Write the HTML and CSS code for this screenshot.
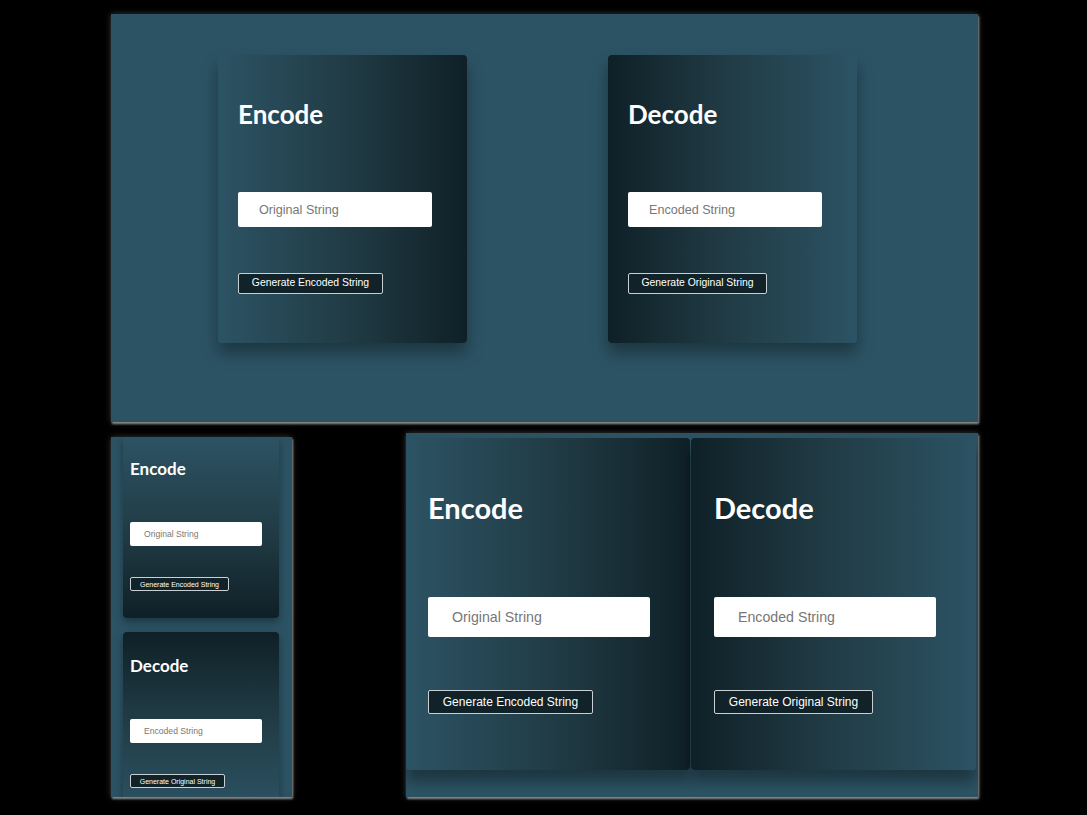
FILE: index.html
```html
<!DOCTYPE html>
<html lang="en">
<head>
<meta charset="utf-8">
<title>Encode / Decode</title>
<link rel="stylesheet" href="styles.css">
</head>
<body>
<div class="desk">
  <section class="win win-desktop">
    <div class="card card-enc">
      <h2 class="title">Encode</h2>
      <input class="field" type="text" placeholder="Original String">
      <button class="btn" type="button">Generate Encoded String</button>
    </div>
    <div class="card card-dec">
      <h2 class="title">Decode</h2>
      <input class="field" type="text" placeholder="Encoded String">
      <button class="btn" type="button">Generate Original String</button>
    </div>
  </section>

  <section class="win win-mobile">
    <div class="card card-enc">
      <h2 class="title">Encode</h2>
      <input class="field" type="text" placeholder="Original String">
      <button class="btn" type="button">Generate Encoded String</button>
    </div>
    <div class="card card-dec">
      <h2 class="title">Decode</h2>
      <input class="field" type="text" placeholder="Encoded String">
      <button class="btn" type="button">Generate Original String</button>
    </div>
  </section>

  <section class="win win-tablet">
    <div class="card card-enc">
      <h2 class="title">Encode</h2>
      <input class="field" type="text" placeholder="Original String">
      <button class="btn" type="button">Generate Encoded String</button>
    </div>
    <div class="card card-dec">
      <h2 class="title">Decode</h2>
      <input class="field" type="text" placeholder="Encoded String">
      <button class="btn" type="button">Generate Original String</button>
    </div>
  </section>
</div>
</body>
</html>
```
FILE: styles.css
```css
* { box-sizing: border-box; }
html, body { margin: 0; padding: 0; background: #000; }
body { width: 1087px; height: 815px; overflow: hidden; font-family: "Liberation Sans", Arial, sans-serif; }

.desk { position: relative; width: 1087px; height: 815px; }

.win {
  position: absolute;
  background: #2c5364;
  overflow: hidden;
  box-shadow: 1px 2px 2px #8a8a8a, 0 0 6px rgba(255,255,255,0.22);
}

.card {
  display: flex;
  flex-direction: column;
  align-items: flex-start;
  border-radius: 4px;
  box-shadow: 0 10px 16px rgba(0,0,0,0.35);
}
.title {
  margin: 0;
  color: #fff;
  font-family: Lato, "Open Sans", sans-serif;
  font-weight: 700;
}
.field {
  border: none;
  outline: none;
  background: #fff;
  border-radius: 2px;
  font-family: "Liberation Sans", Arial, sans-serif;
  color: #333;
}
.field::placeholder { color: #777; }
.btn {
  background: #112229;
  color: #fff;
  border: 1px solid #c9d0d3;
  border-radius: 2px;
  font-family: "Liberation Sans", Arial, sans-serif;
  padding: 0;
  line-height: 1;
}

/* desktop window */
.win-desktop {
  left: 111px; top: 14px; width: 867px; height: 408px;
  display: flex;
  align-items: flex-start;
  gap: 141px;
  padding: 41px 0 0 107px;
}
.win-desktop .card { width: 249px; height: 288px; padding: 43px 20px 0; }
.win-desktop .card-enc { background: linear-gradient(to right, #2c5364 0%, #203a43 55%, #0f2027 100%); }
.win-desktop .card-dec { background: linear-gradient(to left, #2c5364 0%, #203a43 55%, #0f2027 100%); }
.win-desktop .title { font-size: 26px; line-height: 32px; }
.win-desktop .field { width: 194px; height: 35px; margin-top: 62px; padding: 0 0 0 21px; font-size: 12.6px; }
.win-desktop .btn { width: 145px; height: 21px; margin-top: 46px; font-size: 10.4px; }
.win-desktop .card-dec .btn { width: 139px; }

/* mobile window */
.win-mobile {
  left: 111px; top: 437px; width: 181px; height: 360px;
  display: flex;
  flex-direction: column;
  gap: 14px;
  padding: 0 13px 0 12px;
}
.win-mobile .card { width: 156px; height: 181px; padding: 21px 7px 0; flex-shrink: 0; box-shadow: 0 4px 8px rgba(0,0,0,0.35); }
.win-mobile .card-enc { background: linear-gradient(to bottom, #2c5364 0%, #203a43 55%, #0f2027 100%); border-radius: 0 0 4px 4px; }
.win-mobile .card-dec { padding-top: 23px; background: linear-gradient(to top, #2c5364 0%, #203a43 55%, #0f2027 100%); }
.win-mobile .title { font-size: 17px; line-height: 22px; }
.win-mobile .field { width: 132px; height: 24px; margin-top: 42px; padding: 0 0 0 14px; font-size: 8.6px; }
.win-mobile .btn { width: 99px; height: 14px; margin-top: 31px; font-size: 7px; }
.win-mobile .card-dec .btn { width: 95px; }

/* tablet window */
.win-tablet {
  left: 406px; top: 433px; width: 572px; height: 364px;
  display: flex;
  align-items: flex-start;
  gap: 1px;
  padding: 5px 2px 0 0;
}
.win-tablet .card { width: 284px; height: 332px; padding: 52px 22px 0; box-shadow: 0 12px 14px rgba(0,0,0,0.35); }
.win-tablet .card-enc { background: linear-gradient(to right, #2c5364 0%, #203a43 55%, #0f2027 100%); }
.win-tablet .card-dec { width: 285px; padding-left: 23px; background: linear-gradient(to left, #2c5364 0%, #203a43 55%, #0f2027 100%); }
.win-tablet .title { font-size: 29px; line-height: 36px; }
.win-tablet .field { width: 222px; height: 40px; margin-top: 71px; padding: 0 0 0 24px; font-size: 14.2px; }
.win-tablet .btn { width: 165px; height: 24px; margin-top: 53px; font-size: 12px; }
.win-tablet .card-dec .btn { width: 159px; }
```
